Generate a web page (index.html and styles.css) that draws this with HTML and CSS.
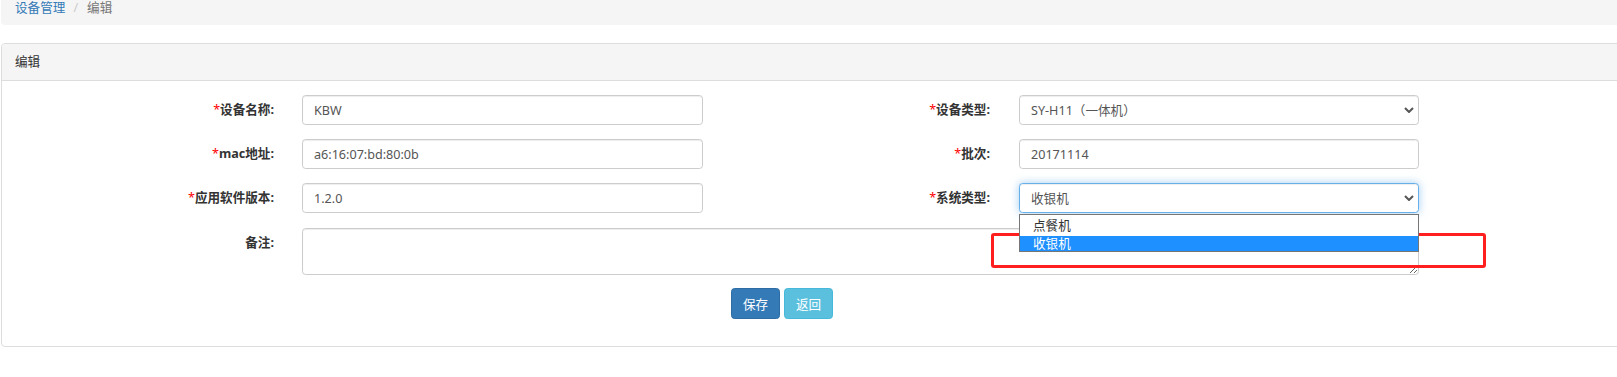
FILE: index.html
```html
<!DOCTYPE html>
<html>
  <head>
    <meta charset="utf-8">
    <title>编辑设备</title>
    <link rel="stylesheet" href="styles.css">
  </head>
  <body>
    <div class="page">
      <ol class="breadcrumb">
        <li><a href="#">设备管理</a></li>
        <li class="active">编辑</li>
      </ol>

      <div class="panel">
        <div class="panel-heading">编辑</div>
        <div class="panel-body">
          <form class="form-grid">
            <label class="control-label"><span class="req">*</span>设备名称:</label>
            <div class="control"><input class="form-control" value="KBW"></div>
            <label class="control-label second"><span class="req">*</span>设备类型:</label>
            <div class="control">
              <select class="form-control"><option>SY-H11（一体机）</option></select>
              <svg class="caret" viewBox="0 0 10 6"><path d="M1 1 L5 5 L9 1" /></svg>
            </div>

            <label class="control-label"><span class="req">*</span>mac地址:</label>
            <div class="control"><input class="form-control" value="a6:16:07:bd:80:0b"></div>
            <label class="control-label second"><span class="req">*</span>批次:</label>
            <div class="control"><input class="form-control" value="20171114"></div>

            <label class="control-label"><span class="req">*</span>应用软件版本:</label>
            <div class="control"><input class="form-control" value="1.2.0"></div>
            <label class="control-label second"><span class="req">*</span>系统类型:</label>
            <div class="control">
              <select class="form-control focus"><option>收银机</option></select>
              <svg class="caret" viewBox="0 0 10 6"><path d="M1 1 L5 5 L9 1" /></svg>
              <!-- open option list of the focused select -->
              <ul class="options">
                <li>点餐机</li>
                <li class="selected">收银机</li>
              </ul>
            </div>

            <label class="control-label note">备注:</label>
            <div class="control note wide"><textarea class="form-control"></textarea></div>
          </form>

          <div class="actions">
            <button class="btn btn-primary">保存</button>
            <button class="btn btn-info">返回</button>
          </div>
        </div>
      </div>

      <div class="mark"></div>
    </div>
  </body>
</html>
```

FILE: styles.css
```css
* {
  box-sizing: border-box;
}

html, body {
  margin: 0;
}

body {
  font-family: "Noto Sans", "Noto Sans CJK SC", sans-serif;
  font-size: 12.6px;
  color: #333;
  background: #fff;
  overflow: hidden;
}

.page {
  position: relative;
  height: 377px;
  padding-left: 1px;
}

/* breadcrumb (top is scrolled off) */
.breadcrumb {
  list-style: none;
  display: flex;
  margin: 0;
  height: 25px;
  width: calc(100% + 10px);
  padding: 0 14px;
  line-height: 16px;
  background: #f5f5f5;
  border-radius: 0 0 4px 4px;
}

.breadcrumb a {
  color: #337ab7;
  text-decoration: none;
}

.breadcrumb li + li::before {
  content: "/";
  color: #ccc;
  padding: 0 9px 0 8px;
}

.breadcrumb .active {
  color: #777;
}

/* panel */
.panel {
  margin-top: 18px;
  width: calc(100% + 20px);
  height: 304px;
  border: 1px solid #ddd;
  border-radius: 4px;
}

.panel-heading {
  height: 37px;
  padding: 0 13px;
  line-height: 36px;
  background: #f5f5f5;
  border-bottom: 1px solid #ddd;
  border-radius: 3px 3px 0 0;
}

.panel-body {
  padding-top: 14px;
}

/* form */
.form-grid {
  display: grid;
  grid-template-columns: 285px 416px 301px 415px;
  grid-template-rows: 30px 30px 30px 47px;
  row-gap: 14px;
}

.control-label {
  text-align: right;
  padding-right: 13px;
  font-weight: bold;
  line-height: 30px;
}

.control-label.second {
  padding-right: 14px;
}

.req {
  color: #f00;
  font-weight: normal;
}

.control {
  position: relative;
  padding-left: 15px;
}

.note {
  margin-top: 1px;
}

.wide {
  grid-column: 2 / 5;
}

.form-control {
  display: block;
  width: 100%;
  height: 30px;
  margin: 0;
  padding: 0 11px;
  font: inherit;
  color: #555;
  background: #fff;
  border: 1px solid #ccc;
  border-radius: 3.6px;
  box-shadow: inset 0 1px 1px rgba(0, 0, 0, .075);
  outline: none;
}

select.form-control {
  -webkit-appearance: none;
  appearance: none;
}

textarea.form-control {
  height: 47px;
  padding: 6px 11px;
}

.form-control.focus {
  border-color: #66afe9;
  box-shadow: inset 0 1px 1px rgba(0, 0, 0, .075), 0 0 8px rgba(102, 175, 233, .6);
}

.caret {
  position: absolute;
  right: 5px;
  top: 12px;
  width: 10px;
  height: 6px;
  fill: none;
  stroke: #555;
  stroke-width: 2;
}

/* the open select list */
.options {
  list-style: none;
  position: absolute;
  left: 15px;
  top: 31px;
  width: 400px;
  margin: 0;
  padding: 0;
  background: #fff;
  border: 1px solid #767676;
  z-index: 3;
}

.options li {
  height: 21px;
  line-height: 21px;
  padding-left: 13px;
  color: #333;
}

.options li.selected {
  height: 15px;
  line-height: 15px;
  background: #1e90ff;
  color: #fff;
}

/* buttons */
.actions {
  display: flex;
  gap: 4px;
  margin-top: 14px;
  padding-left: 729px;
}

.btn {
  width: 49px;
  height: 31px;
  padding: 0;
  font: inherit;
  color: #fff;
  border: 1px solid;
  border-radius: 3.6px;
  cursor: pointer;
}

.btn-primary {
  background: #337ab7;
  border-color: #2e6da4;
}

.btn-info {
  background: #5bc0de;
  border-color: #46b8da;
}

/* red annotation box */
.mark {
  position: absolute;
  left: 991px;
  top: 233px;
  width: 495px;
  height: 35px;
  border: 3px solid #ff1f1f;
  border-radius: 3px;
  z-index: 2;
}
```
